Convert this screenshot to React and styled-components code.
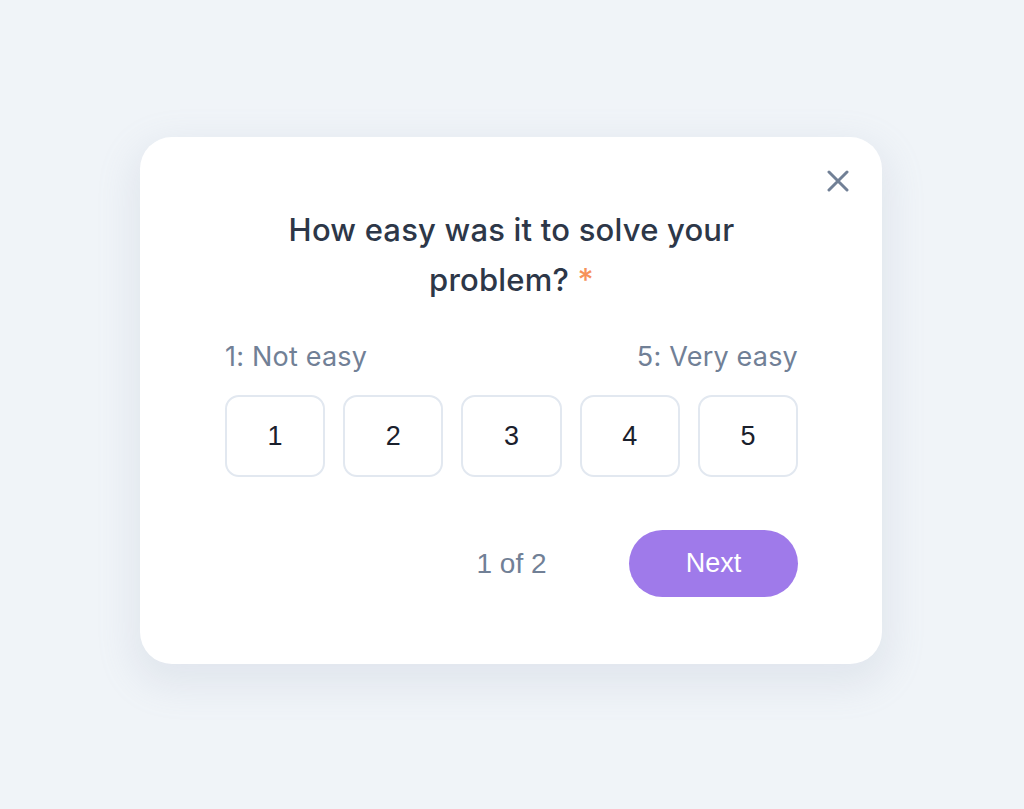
import React from "react";
import styled, { createGlobalStyle } from "styled-components";

const Global = createGlobalStyle`
  html, body { margin: 0; padding: 0; background: #f0f4f8; }
  body { font-family: Inter, "Noto Sans", sans-serif; }
`;

const Page = styled.div`
  width: 1024px;
  height: 809px;
  display: flex;
  align-items: flex-start;
  justify-content: flex-start;
  padding: 137px 0 0 140px;
  box-sizing: border-box;
`;

const Card = styled.div`
  position: relative;
  width: 742px;
  box-sizing: border-box;
  background: #ffffff;
  border-radius: 32px;
  padding: 68px 84px 67px 85px;
  box-shadow: 0 14px 36px 8px rgba(148, 163, 184, 0.16);
  display: flex;
  flex-direction: column;
`;

const Close = styled.button`
  position: absolute;
  top: 22px;
  right: 22px;
  width: 44px;
  height: 44px;
  border: none;
  background: none;
  padding: 0;
  display: flex;
  align-items: center;
  justify-content: center;
  cursor: pointer;
`;

const Title = styled.h2`
  margin: 0 auto;
  max-width: 520px;
  text-align: center;
  font-family: Inter, sans-serif;
  font-weight: 500;
  font-size: 31px;
  letter-spacing: 0.2px;
  line-height: 50px;
  color: #2d3748;
`;

const Star = styled.span`
  color: #f6925a;
`;

const Labels = styled.div`
  margin-top: 36px;
  display: flex;
  justify-content: space-between;
  font-family: Inter, sans-serif;
  font-size: 27px;
  letter-spacing: 0.2px;
  line-height: 32px;
  color: #718096;
`;

const Scale = styled.div`
  margin-top: 22px;
  display: grid;
  grid-template-columns: repeat(5, 1fr);
  gap: 18px;
`;

const ScaleButton = styled.button`
  height: 82px;
  border: 2px solid #e2e8f0;
  border-radius: 14px;
  background: #ffffff;
  font-family: "Liberation Sans", Arial, sans-serif;
  font-size: 27px;
  color: #1a202c;
  cursor: pointer;
`;

const Footer = styled.div`
  margin-top: 53px;
  display: grid;
  grid-template-columns: 1fr auto 1fr;
  align-items: center;
`;

const Progress = styled.span`
  grid-column: 2;
  font-family: "Liberation Sans", Arial, sans-serif;
  font-size: 28px;
  color: #718096;
`;

const NextButton = styled.button`
  grid-column: 3;
  justify-self: end;
  width: 169px;
  height: 67px;
  border: none;
  border-radius: 34px;
  background: #9f7aea;
  color: #ffffff;
  font-family: "Liberation Sans", Arial, sans-serif;
  font-size: 27px;
  cursor: pointer;
`;

export default function App() {
  return (
    <>
      <Global />
      <Page>
        <Card>
          <Close aria-label="Close">
            <svg width="22" height="22" viewBox="0 0 22 22" fill="none">
              <path d="M2 2L20 20M20 2L2 20" stroke="#718096" strokeWidth="3" strokeLinecap="round" />
            </svg>
          </Close>
          <Title>
            How easy was it to solve your problem? <Star>*</Star>
          </Title>
          <Labels>
            <span>1: Not easy</span>
            <span>5: Very easy</span>
          </Labels>
          <Scale>
            {[1, 2, 3, 4, 5].map((n) => (
              <ScaleButton key={n}>{n}</ScaleButton>
            ))}
          </Scale>
          <Footer>
            <Progress>1 of 2</Progress>
            <NextButton>Next</NextButton>
          </Footer>
        </Card>
      </Page>
    </>
  );
}
